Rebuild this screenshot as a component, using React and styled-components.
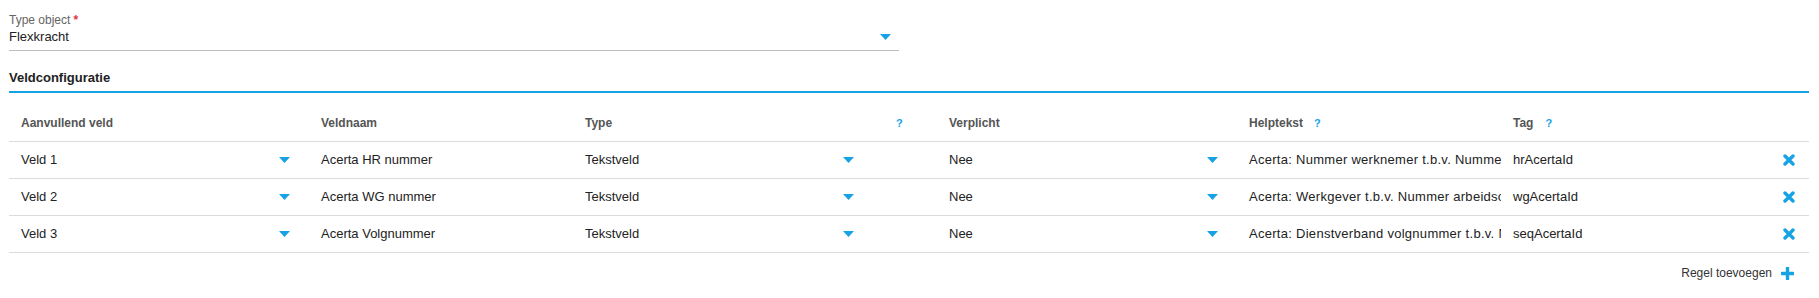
import styled, { createGlobalStyle } from "styled-components";

const GlobalStyle = createGlobalStyle`
  body {
    margin: 0;
    background: #fff;
    font-family: "Liberation Sans", Arial, sans-serif;
    color: #222;
  }
`

const BLUE = "#17a2e4"
const COLS = "300px 264px 300px 64px 300px 264px 1fr 40px"

const rows = [
  {
    veld: 'Veld 1',
    naam: 'Acerta HR nummer',
    type: 'Tekstveld',
    verplicht: 'Nee',
    help: 'Acerta: Nummer werknemer t.b.v. Nummer arbeidsovereenkomst',
    tag: 'hrAcertaId'
  },
  {
    veld: 'Veld 2',
    naam: 'Acerta WG nummer',
    type: 'Tekstveld',
    verplicht: 'Nee',
    help: 'Acerta: Werkgever t.b.v. Nummer arbeidsovereenkomst',
    tag: 'wgAcertaId'
  },
  {
    veld: 'Veld 3',
    naam: 'Acerta Volgnummer',
    type: 'Tekstveld',
    verplicht: 'Nee',
    help: 'Acerta: Dienstverband volgnummer t.b.v. Nummer arbeidsovereenkomst',
    tag: 'seqAcertaId'
  }
]

const Page = styled.div`
  padding: 12px 10px 0 9px;
`

const Field = styled.div`
  width: 890px;
  border-bottom: 1px solid #bdbdbd;
  padding-bottom: 4px;
`

const Label = styled.div`
  font-size: 12px;
  line-height: 16px;
  color: #666;
`

const Required = styled.span`
  color: #e8333a;
  font-weight: bold;
  margin-left: 3px;
`

const Value = styled.div`
  display: flex;
  align-items: center;
  justify-content: space-between;
  font-size: 13px;
  line-height: 18px;
  padding-right: 8px;
`

const SectionTitle = styled.div`
  margin-top: 18px;
  font-size: 13px;
  font-weight: bold;
  line-height: 18px;
  color: #222;
  padding-bottom: 4px;
  border-bottom: 2px solid ${BLUE};
`

const Row = styled.div`
  display: grid;
  grid-template-columns: ${COLS};
  align-items: center;
  box-sizing: border-box;
  height: ${(p) => (p.$head ? 49 : 37)}px;
  padding-top: ${(p) => (p.$head ? 12 : 0)}px;
  border-bottom: 1px solid #dcdcdc;
  font-size: ${(p) => (p.$head ? 12 : 13)}px;
  font-weight: ${(p) => (p.$head ? 'bold' : 'normal')};
  color: ${(p) => (p.$head ? '#555' : '#222')};
  line-height: 18px;
`

const Cell = styled.div`
  min-width: 0;
  display: flex;
  align-items: center;
  padding: 0 13px 0 ${(p) => p.$left || 12}px;
  white-space: nowrap;
  overflow: hidden;
`

const HelpText = styled(Cell)`
  letter-spacing: 0.28px;
`

const SelectCell = styled(Cell)`
  justify-content: space-between;
  padding-right: 19px;
`

const IconCell = styled.div`
  display: flex;
  justify-content: center;
  align-items: center;
`

const Help = styled.span`
  color: ${BLUE};
  font-size: 11px;
  font-weight: bold;
  margin-left: ${(p) => p.$gap || 0}px;
`

const Footer = styled.div`
  display: flex;
  justify-content: flex-end;
  align-items: center;
  gap: 9px;
  height: 40px;
  padding-right: 15px;
  font-size: 12px;
  color: #333;
`

function Arrow() {
  return (
    <svg width="11" height="6" viewBox="0 0 11 6">
      <polygon points="0,0 11,0 5.5,6" fill={BLUE} />
    </svg>
  )
}

function Cross() {
  return (
    <svg width="12" height="12" viewBox="0 0 12 12">
      <path d="M2 2 L10 10 M10 2 L2 10" stroke={BLUE} strokeWidth="3.4" strokeLinecap="round" />
    </svg>
  )
}

function Plus() {
  return (
    <svg width="13" height="13" viewBox="0 0 13 13">
      <path d="M6.5 1 V12 M1 6.5 H12" stroke={BLUE} strokeWidth="3.4" strokeLinecap="round" />
    </svg>
  )
}

export default function App() {
  return (
    <Page>
      <GlobalStyle />
      <Field>
        <Label>Type object<Required>*</Required></Label>
        <Value>
          <span>Flexkracht</span>
          <Arrow />
        </Value>
      </Field>

      <SectionTitle>Veldconfiguratie</SectionTitle>

      <Row $head>
        <Cell>Aanvullend veld</Cell>
        <Cell>Veldnaam</Cell>
        <Cell>Type</Cell>
        <Cell $left={23}><Help>?</Help></Cell>
        <Cell>Verplicht</Cell>
        <Cell>Helptekst<Help $gap={11}>?</Help></Cell>
        <Cell>Tag<Help $gap={12}>?</Help></Cell>
        <div />
      </Row>
      {rows.map((r, i) => (
        <Row key={`row-${i}`}>
          <SelectCell>{r.veld}<Arrow /></SelectCell>
          <Cell>{r.naam}</Cell>
          <SelectCell>{r.type}<Arrow /></SelectCell>
          <div />
          <SelectCell>{r.verplicht}<Arrow /></SelectCell>
          <HelpText>{r.help}</HelpText>
          <Cell>{r.tag}</Cell>
          <IconCell><Cross /></IconCell>
        </Row>
      ))}

      <Footer>
        Regel toevoegen
        <Plus />
      </Footer>
    </Page>
  )
}
